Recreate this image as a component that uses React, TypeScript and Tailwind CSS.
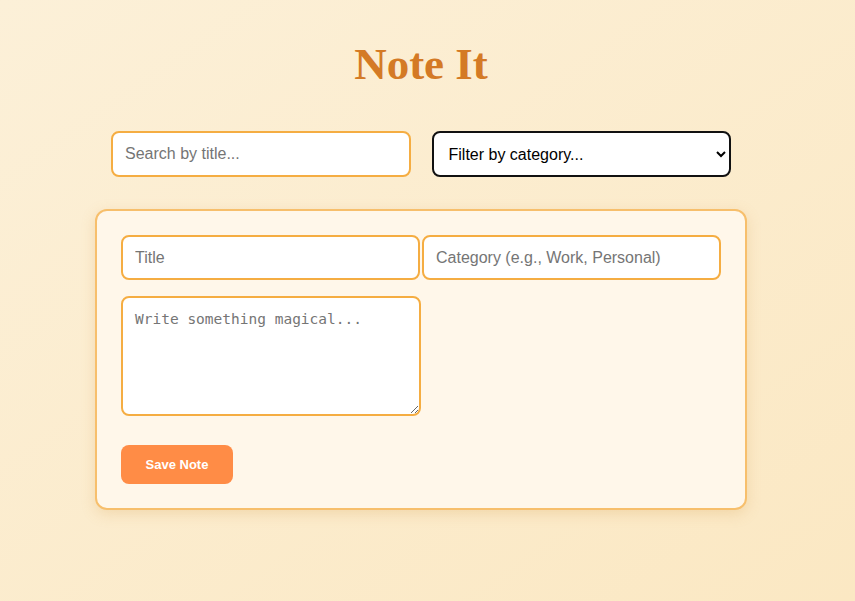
import React from "react";

export default function App() {
  return (
    <div className="min-h-[601px] w-full bg-gradient-to-br from-[#fcf0d8] to-[#fbe8c3] pr-[13px] flex flex-col items-center pt-[38px] pb-10">
      <h1
        className="text-[45px] leading-[52px] font-bold text-[#d47a25]"
        style={{ fontFamily: '"Liberation Serif", "Times New Roman", serif' }}
      >
        Note It
      </h1>
      <div
        className="mt-[41px] flex gap-[21px] w-[620px]"
        style={{ fontFamily: '"Liberation Sans", Arial, sans-serif' }}
      >
        <input
          type="text"
          placeholder="Search by title..."
          className="w-[300px] h-[46px] px-3 text-base bg-white border-2 border-[#f5ad42] rounded-lg outline-none placeholder:text-[#757575]"
        />
        <select
          defaultValue=""
          className="w-[300px] h-[46px] pl-[11px] pr-2 text-base text-black bg-white border-2 border-[#111] rounded-lg outline-none"
        >
          <option value="">Filter by category...</option>
          <option value="work">Work</option>
          <option value="personal">Personal</option>
        </select>
      </div>
      <div
        className="mt-[32px] w-[652px] bg-[#fff7ea] border-2 border-[#f7bf6c] rounded-xl p-6 shadow-[0_4px_14px_rgba(214,160,80,0.25)]"
        style={{ fontFamily: '"Liberation Sans", Arial, sans-serif' }}
      >
        <div className="flex gap-[2px]">
          <input
            type="text"
            placeholder="Title"
            className="w-[299px] h-[45px] px-3 text-base bg-white border-2 border-[#f5ad42] rounded-lg outline-none placeholder:text-[#757575]"
          />
          <input
            type="text"
            placeholder="Category (e.g., Work, Personal)"
            className="w-[299px] h-[45px] px-3 text-base bg-white border-2 border-[#f5ad42] rounded-lg outline-none placeholder:text-[#757575]"
          />
        </div>
        <textarea
          placeholder="Write something magical..."
          className="mt-4 block w-[300px] h-[120px] px-3 py-3 text-[14.5px] leading-[18px] bg-white border-2 border-[#f5ad42] rounded-lg outline-none placeholder:text-[#757575]"
          style={{ fontFamily: '"DejaVu Sans Mono", "Liberation Mono", monospace' }}
        />
        <button
          type="button"
          className="mt-[29px] block w-[112px] h-[39px] bg-[#ff8c46] text-white text-[13px] font-bold rounded-lg"
        >
          Save Note
        </button>
      </div>
    </div>
  );
}
